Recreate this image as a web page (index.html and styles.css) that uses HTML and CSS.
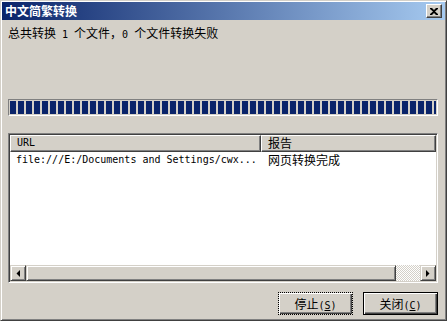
FILE: index.html
```html
<!DOCTYPE html>
<html lang="zh-CN">
<head>
    <meta charset="UTF-8">
    <title>中文简繁转换</title>
    <link rel="stylesheet" href="styles.css">
</head>
<body>
    <div class="win">
        <div class="titlebar">
            <span class="caption">中文简繁转换</span>
            <span class="xbtn">
                <svg width="8" height="7" viewBox="0 0 8 7">
                    <path d="M0 0h2l2 2 2-2h2v1l-3 2.5 3 2.5v1h-2l-2-2-2 2h-2v-1l3-2.5-3-2.5z" fill="#000"/>
                </svg>
            </span>
        </div>
        <div class="body">
            <div class="msg">总共转换<span class="a"> 1 </span>个文件，<span class="a">0 </span>个文件转换失败</div>
            <div class="progress"><div class="fill"></div></div>
            <div class="list">
                <div class="head">
                    <div class="col url">URL</div>
                    <div class="col rep">报告</div>
                </div>
                <div class="rows">
                    <div class="row">
                        <div class="cell url a">file:///E:/Documents and Settings/cwx...</div>
                        <div class="cell rep">网页转换完成</div>
                    </div>
                </div>
                <div class="hscroll">
                    <span class="sbtn">
                        <svg width="4" height="7" viewBox="0 0 4 7"><path d="M4 0v7L0.5 3.5z" fill="#000"/></svg>
                    </span>
                    <span class="thumb"></span>
                    <span class="track"></span>
                    <span class="sbtn">
                        <svg width="4" height="7" viewBox="0 0 4 7"><path d="M0 0v7L3.5 3.5z" fill="#000"/></svg>
                    </span>
                </div>
            </div>
            <div class="buttons">
                <button class="btn focus"><span>停止<span class="a">(<u>S</u>)</span></span></button>
                <button class="btn def"><span>关闭<span class="a">(<u>C</u>)</span></span></button>
            </div>
        </div>
    </div>
</body>
</html>
```

FILE: styles.css
```css
*{
    margin: 0; padding: 0;
    box-sizing: border-box;
}
body{
    width: 447px;
    height: 321px;
    overflow: hidden;
    font-family: "Noto Sans CJK SC", "Liberation Sans", sans-serif;
    font-size: 12px;
    color: #000;
}
.a{
    font-family: "DejaVu Sans Mono", monospace;
    font-size: 10px;
}
.win{
    width: 447px;
    height: 321px;
    background: #d4d0c8;
    border: 1px solid;
    border-color: #d4d0c8 #404040 #404040 #d4d0c8;
    box-shadow: inset 1px 1px #fff, inset -1px -1px #808080;
    padding: 1px;
    display: flex;
    flex-direction: column;
}
.titlebar{
    height: 18px;
    background: linear-gradient(to right, #0a246a, #a6caf0);
    display: flex;
    align-items: center;
    justify-content: space-between;
    padding: 0 3px 0 3px;
}
.caption{
    color: #fff;
    font-weight: bold;
    font-size: 12px;
    line-height: 14px;
}
.xbtn{
    width: 16px;
    height: 14px;
    background: #d4d0c8;
    border: 1px solid;
    border-color: #fff #404040 #404040 #fff;
    box-shadow: inset -1px -1px #808080;
    display: flex;
    align-items: center;
    justify-content: center;
}
.body{
    flex: 1;
    padding: 6px 7px 0 6px;
    display: flex;
    flex-direction: column;
}
.msg{
    line-height: 14px;
    white-space: pre;
}
.progress{
    margin-top: 57px;
    height: 17px;
    border: 1px solid;
    border-color: #808080 #fff #fff #808080;
    padding: 1px;
}
.fill{
    height: 100%;
    width: 426px;
    background: repeating-linear-gradient(to right, #0a246a 0, #0a246a 6px, transparent 6px, transparent 8px);
}
.list{
    margin-top: 17px;
    height: 150px;
    border: 1px solid;
    border-color: #808080 #fff #fff #808080;
    box-shadow: inset 1px 1px #404040, inset -1px -1px #d4d0c8;
    padding: 1px;
    background: #fff;
    display: flex;
    flex-direction: column;
}
.head{
    display: flex;
    height: 17px;
    flex-shrink: 0;
}
.col{
    background: #d4d0c8;
    border: 1px solid;
    border-color: #fff #404040 #404040 #fff;
    box-shadow: inset -1px -1px #808080;
    line-height: 14px;
    padding-left: 6px;
}
.col.url{
    width: 251px;
    font-family: "DejaVu Sans Mono", monospace;
    font-size: 10px;
}
.col.rep{
    flex: 1;
}
.rows{
    flex: 1;
}
.row{
    display: flex;
    line-height: 14px;
    padding-top: 1px;
}
.cell.url{
    width: 251px;
    padding-left: 6px;
    white-space: pre;
}
.cell.rep{
    padding-left: 7px;
}
.hscroll{
    display: flex;
    height: 16px;
    flex-shrink: 0;
}
.sbtn, .thumb{
    background: #d4d0c8;
    border: 1px solid;
    border-color: #d4d0c8 #404040 #404040 #d4d0c8;
    box-shadow: inset 1px 1px #fff, inset -1px -1px #808080;
}
.sbtn{
    width: 16px;
    display: flex;
    align-items: center;
    justify-content: center;
}
.thumb{
    width: 370px;
}
.track{
    flex: 1;
    background-color: #fff;
    background-image: repeating-conic-gradient(#d4d0c8 0 25%, #fff 0 50%);
    background-size: 2px 2px;
}
.buttons{
    margin-top: 9px;
    display: flex;
    justify-content: flex-end;
    gap: 10px;
}
.btn{
    width: 75px;
    height: 23px;
    background: #d4d0c8;
    font-family: "Noto Sans CJK SC", sans-serif;
    font-size: 12px;
    color: #000;
    display: flex;
    align-items: center;
    justify-content: center;
}
.btn.focus{
    border: 1px dotted #000;
    box-shadow: inset 1px 1px #fff, inset -1px -1px #404040, inset -2px -2px #808080;
}
.btn.def{
    border: 1px solid #000;
    box-shadow: inset 1px 1px #fff, inset -1px -1px #404040, inset -2px -2px #808080;
}
```
